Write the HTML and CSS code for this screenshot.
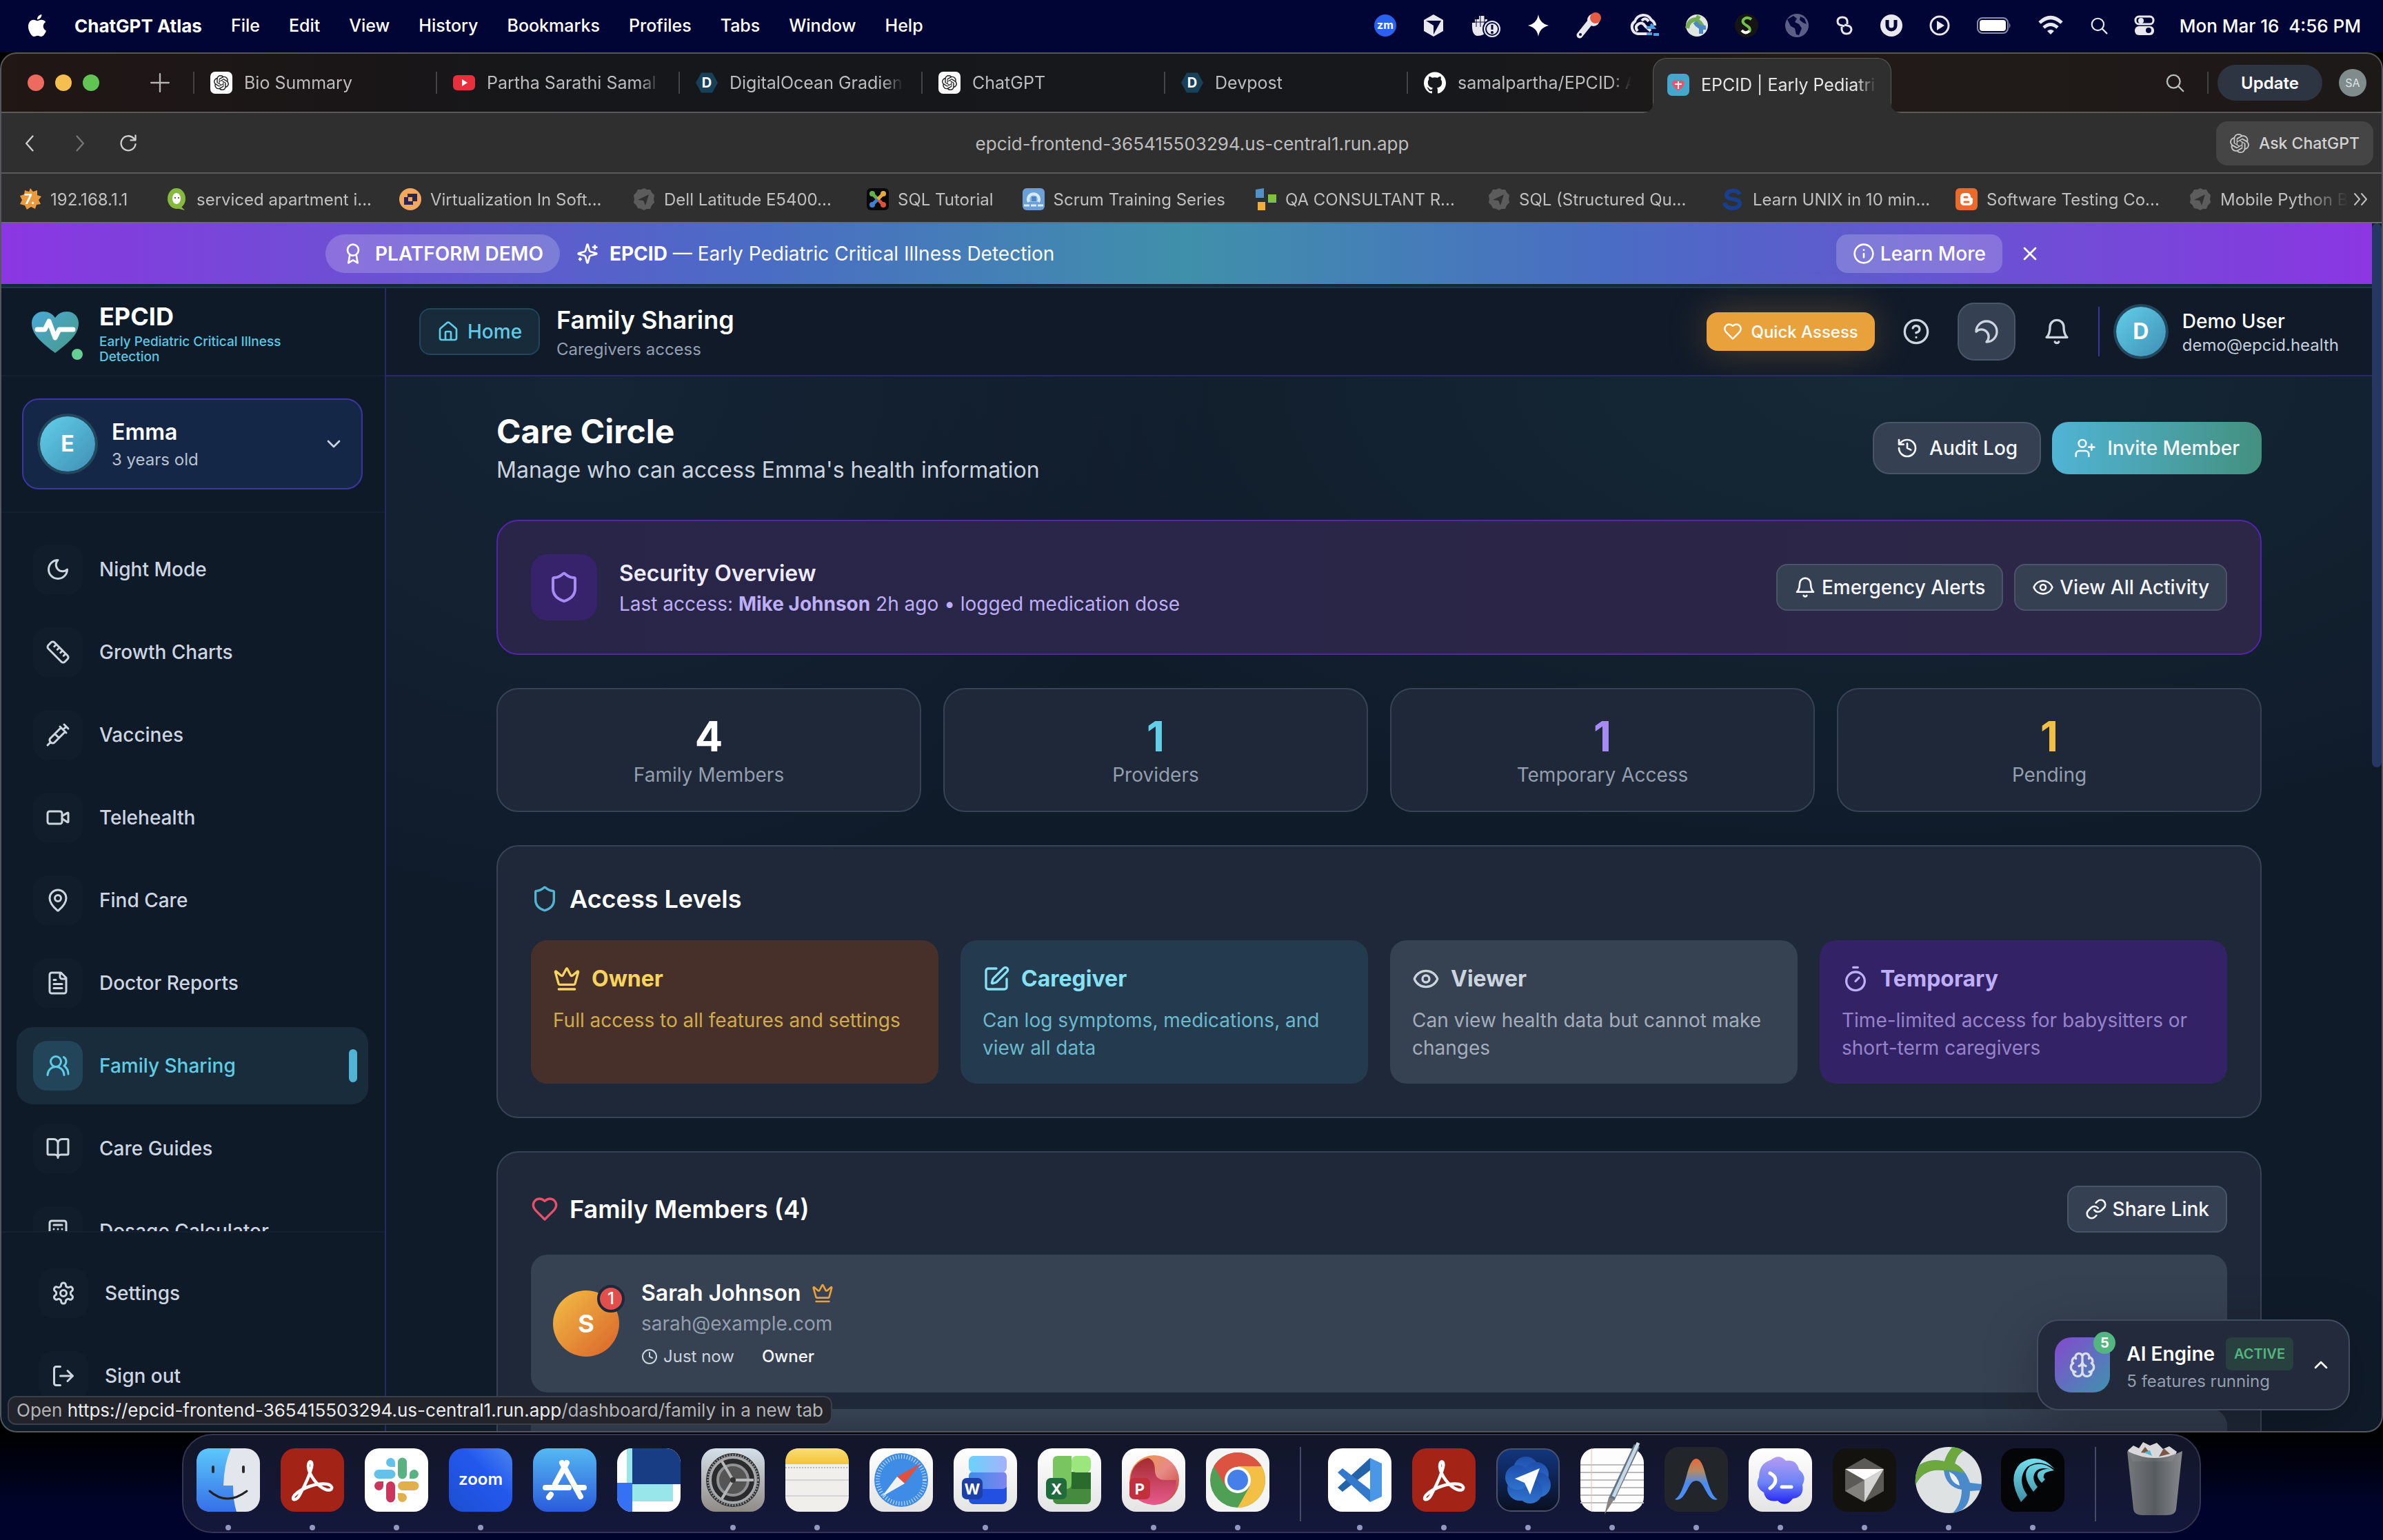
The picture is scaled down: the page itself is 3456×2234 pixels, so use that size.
FILE: index.html
```html
<!DOCTYPE html>
<html lang="en">
<head>
<meta charset="utf-8">
<title>EPCID | Early Pediatric Critical Illness Detection</title>
<link rel="stylesheet" href="styles.css">
</head>
<body>
<svg class="sprite" aria-hidden="true">
  <defs>
    <linearGradient id="g-heart" x1="0" y1="0" x2="1" y2="1"><stop offset="0" stop-color="#4ba9d6"/><stop offset="1" stop-color="#479a86"/></linearGradient>
    <linearGradient id="g-finder" x1="0" y1="0" x2="0" y2="1"><stop offset="0" stop-color="#5cc8fa"/><stop offset="1" stop-color="#356fe8"/></linearGradient>
    <linearGradient id="g-zoom" x1="1" y1="0" x2="0" y2="1"><stop offset="0" stop-color="#4a86f0"/><stop offset=".4" stop-color="#2358ee"/><stop offset="1" stop-color="#1c4fd0"/></linearGradient>
    <linearGradient id="g-store" x1="0" y1="0" x2="0" y2="1"><stop offset="0" stop-color="#55b8f3"/><stop offset="1" stop-color="#2a5bdb"/></linearGradient>
    <linearGradient id="g-grey" x1="0" y1="0" x2="0" y2="1"><stop offset="0" stop-color="#d5e0e9"/><stop offset="1" stop-color="#8f8b87"/></linearGradient>
    <linearGradient id="g-white" x1="0" y1="0" x2="0" y2="1"><stop offset="0" stop-color="#fff"/><stop offset="1" stop-color="#e4e4e4"/></linearGradient>
    <linearGradient id="g-notes" x1="0" y1="0" x2="0" y2="1"><stop offset="0" stop-color="#fadf76"/><stop offset="1" stop-color="#f4c13a"/></linearGradient>
    <linearGradient id="g-word1" x1="0" y1="0" x2="1" y2="0"><stop offset="0" stop-color="#69d2fb"/><stop offset="1" stop-color="#a4b2fb"/></linearGradient>
    <linearGradient id="g-word2" x1="0" y1="0" x2="1" y2="0"><stop offset="0" stop-color="#3a8ee8"/><stop offset="1" stop-color="#7f84f0"/></linearGradient>
    <linearGradient id="g-ppt" x1="0" y1="0" x2="1" y2="1"><stop offset="0" stop-color="#f09a3e"/><stop offset=".5" stop-color="#e78a86"/><stop offset="1" stop-color="#c2392e"/></linearGradient>
    <linearGradient id="g-ppt2" x1="0" y1="0" x2="0" y2="1"><stop offset="0" stop-color="#a32c2f"/><stop offset="1" stop-color="#e85a8e"/></linearGradient>
    <linearGradient id="g-nav" x1="0" y1="0" x2="0" y2="1"><stop offset="0" stop-color="#12367f"/><stop offset="1" stop-color="#0a0f20"/></linearGradient>
    <linearGradient id="g-petal" x1="0" y1="0" x2="0" y2="1"><stop offset="0" stop-color="#1f4fae"/><stop offset="1" stop-color="#2f73cc"/></linearGradient>
    <linearGradient id="g-arc" x1="0" y1="0" x2="0" y2="1"><stop offset="0" stop-color="#e8683a"/><stop offset=".3" stop-color="#b58a63"/><stop offset=".6" stop-color="#4a8af0"/><stop offset="1" stop-color="#4d8ff8"/></linearGradient>
    <linearGradient id="g-codex" x1="0" y1="0" x2="0" y2="1"><stop offset="0" stop-color="#b59cf3"/><stop offset=".55" stop-color="#6c83f5"/><stop offset="1" stop-color="#2222f2"/></linearGradient>
    <linearGradient id="g-wave" x1="0" y1="0" x2="0" y2="1"><stop offset="0" stop-color="#72e0ee"/><stop offset="1" stop-color="#3f8fa5"/></linearGradient>
    <linearGradient id="g-trash" x1="0" y1="0" x2="1" y2="0"><stop offset="0" stop-color="#7b7e80"/><stop offset=".5" stop-color="#5a5f62"/><stop offset="1" stop-color="#8d9092"/></linearGradient>
  </defs>
  <symbol id="i-award" viewBox="0 0 24 24"><circle cx="12" cy="8" r="6"/><path d="M15.477 12.89 17 22l-5-3-5 3 1.523-9.11"/></symbol>
  <symbol id="i-sparkles" viewBox="0 0 24 24"><path d="M9.937 15.5A2 2 0 0 0 8.5 14.063l-6.135-1.582a.5.5 0 0 1 0-.962L8.5 9.936A2 2 0 0 0 9.937 8.5l1.582-6.135a.5.5 0 0 1 .963 0L14.063 8.5A2 2 0 0 0 15.5 9.937l6.135 1.581a.5.5 0 0 1 0 .964L15.5 14.063a2 2 0 0 0-1.437 1.437l-1.582 6.135a.5.5 0 0 1-.963 0zM20 3v4M22 5h-4M4 17v2M5 18H3"/></symbol>
  <symbol id="i-info" viewBox="0 0 24 24"><circle cx="12" cy="12" r="10"/><path d="M12 16v-4M12 8h.01"/></symbol>
  <symbol id="i-x" viewBox="0 0 24 24"><path d="M18 6 6 18M6 6l12 12"/></symbol>
  <symbol id="i-house" viewBox="0 0 24 24"><path d="M15 21v-8a1 1 0 0 0-1-1h-4a1 1 0 0 0-1 1v8M3 10a2 2 0 0 1 .709-1.528l7-5.999a2 2 0 0 1 2.582 0l7 5.999A2 2 0 0 1 21 10v9a2 2 0 0 1-2 2H5a2 2 0 0 1-2-2z"/></symbol>
  <symbol id="i-heart" viewBox="0 0 24 24"><path d="M19 14c1.49-1.46 3-3.21 3-5.5A5.5 5.5 0 0 0 16.5 3c-1.76 0-3 .5-4.5 2-1.5-1.5-2.74-2-4.5-2A5.5 5.5 0 0 0 2 8.5c0 2.3 1.5 4.05 3 5.5l7 7Z"/></symbol>
  <symbol id="i-help" viewBox="0 0 24 24"><circle cx="12" cy="12" r="10"/><path d="M9.09 9a3 3 0 0 1 5.83 1c0 2-3 3-3 3M12 17h.01"/></symbol>
  <symbol id="i-moon" viewBox="0 0 24 24"><path d="M12 3a6 6 0 0 0 9 9 9 9 0 1 1-9-9Z"/></symbol>
  <symbol id="i-bell" viewBox="0 0 24 24"><path d="M6 8a6 6 0 0 1 12 0c0 7 3 9 3 9H3s3-2 3-9M10.3 21a1.94 1.94 0 0 0 3.4 0"/></symbol>
  <symbol id="i-down" viewBox="0 0 24 24"><path d="m6 9 6 6 6-6"/></symbol>
  <symbol id="i-up" viewBox="0 0 24 24"><path d="m18 15-6-6-6 6"/></symbol>
  <symbol id="i-ruler" viewBox="0 0 24 24"><path d="M21.3 15.3a2.4 2.4 0 0 1 0 3.4l-2.6 2.6a2.4 2.4 0 0 1-3.4 0L2.7 8.7a2.41 2.41 0 0 1 0-3.4l2.6-2.6a2.41 2.41 0 0 1 3.4 0ZM14.5 12.5l2-2M11.5 9.5l2-2M8.5 6.5l2-2M17.5 15.5l2-2"/></symbol>
  <symbol id="i-syringe" viewBox="0 0 24 24"><path d="m18 2 4 4M17 7l3-3M19 9 8.7 19.3c-1 1-2.5 1-3.4 0l-.6-.6c-1-1-1-2.5 0-3.4L15 5M9 11l4 4M5 19l-3 3M14 4l6 6"/></symbol>
  <symbol id="i-video" viewBox="0 0 24 24"><path d="m16 13 5.223 3.482a.5.5 0 0 0 .777-.416V7.87a.5.5 0 0 0-.752-.432L16 10.5"/><rect x="2" y="6" width="14" height="12" rx="2"/></symbol>
  <symbol id="i-pin" viewBox="0 0 24 24"><path d="M20 10c0 4.993-5.539 10.193-7.399 11.799a1 1 0 0 1-1.202 0C9.539 20.193 4 14.993 4 10a8 8 0 0 1 16 0"/><circle cx="12" cy="10" r="3"/></symbol>
  <symbol id="i-file" viewBox="0 0 24 24"><path d="M15 2H6a2 2 0 0 0-2 2v16a2 2 0 0 0 2 2h12a2 2 0 0 0 2-2V7ZM14 2v4a2 2 0 0 0 2 2h4M10 9H8M16 13H8M16 17H8"/></symbol>
  <symbol id="i-users" viewBox="0 0 24 24"><path d="M18 21a8 8 0 0 0-16 0"/><circle cx="10" cy="8" r="5"/><path d="M22 20c0-3.37-2-6.5-4-8a5 5 0 0 0-.45-8.3"/></symbol>
  <symbol id="i-book" viewBox="0 0 24 24"><path d="M12 7v14M3 18a1 1 0 0 1-1-1V4a1 1 0 0 1 1-1h5a4 4 0 0 1 4 4 4 4 0 0 1 4-4h5a1 1 0 0 1 1 1v13a1 1 0 0 1-1 1h-6a3 3 0 0 0-3 3 3 3 0 0 0-3-3z"/></symbol>
  <symbol id="i-calc" viewBox="0 0 24 24"><rect x="4" y="2" width="16" height="20" rx="2"/><path d="M8 6h8M16 14v4M16 10h.01M12 10h.01M8 10h.01M12 14h.01M8 14h.01M12 18h.01M8 18h.01"/></symbol>
  <symbol id="i-gear" viewBox="0 0 24 24"><path d="M12.22 2h-.44a2 2 0 0 0-2 2v.18a2 2 0 0 1-1 1.73l-.43.25a2 2 0 0 1-2 0l-.15-.08a2 2 0 0 0-2.73.73l-.22.38a2 2 0 0 0 .73 2.73l.15.1a2 2 0 0 1 1 1.72v.51a2 2 0 0 1-1 1.74l-.15.09a2 2 0 0 0-.73 2.73l.22.38a2 2 0 0 0 2.73.73l.15-.08a2 2 0 0 1 2 0l.43.25a2 2 0 0 1 1 1.73V20a2 2 0 0 0 2 2h.44a2 2 0 0 0 2-2v-.18a2 2 0 0 1 1-1.73l.43-.25a2 2 0 0 1 2 0l.15.08a2 2 0 0 0 2.73-.73l.22-.39a2 2 0 0 0-.73-2.73l-.15-.08a2 2 0 0 1-1-1.74v-.5a2 2 0 0 1 1-1.74l.15-.09a2 2 0 0 0 .73-2.73l-.22-.38a2 2 0 0 0-2.73-.73l-.15.08a2 2 0 0 1-2 0l-.43-.25a2 2 0 0 1-1-1.73V4a2 2 0 0 0-2-2z"/><circle cx="12" cy="12" r="3"/></symbol>
  <symbol id="i-logout" viewBox="0 0 24 24"><path d="M9 21H5a2 2 0 0 1-2-2V5a2 2 0 0 1 2-2h4M16 17l5-5-5-5M21 12H9"/></symbol>
  <symbol id="i-history" viewBox="0 0 24 24"><path d="M3 12a9 9 0 1 0 9-9 9.75 9.75 0 0 0-6.74 2.74L3 8M3 3v5h5M12 7v5l4 2"/></symbol>
  <symbol id="i-userplus" viewBox="0 0 24 24"><path d="M16 21v-2a4 4 0 0 0-4-4H6a4 4 0 0 0-4 4v2M19 8v6M22 11h-6"/><circle cx="9" cy="7" r="4"/></symbol>
  <symbol id="i-shield" viewBox="0 0 24 24"><path d="M20 13c0 5-3.5 7.5-7.66 8.95a1 1 0 0 1-.67-.01C7.5 20.5 4 18 4 13V6a1 1 0 0 1 1-1c2 0 4.5-1.2 6.24-2.72a1.17 1.17 0 0 1 1.52 0C14.51 3.81 17 5 19 5a1 1 0 0 1 1 1z"/></symbol>
  <symbol id="i-eye" viewBox="0 0 24 24"><path d="M2.062 12.348a1 1 0 0 1 0-.696 10.75 10.75 0 0 1 19.876 0 1 1 0 0 1 0 .696 10.75 10.75 0 0 1-19.876 0"/><circle cx="12" cy="12" r="3"/></symbol>
  <symbol id="i-crown" viewBox="0 0 24 24"><path d="M11.562 3.266a.5.5 0 0 1 .876 0L15.39 8.87a1 1 0 0 0 1.516.294L21.183 5.5a.5.5 0 0 1 .798.519l-2.834 10.246a1 1 0 0 1-.956.734H5.81a1 1 0 0 1-.957-.734L2.02 6.02a.5.5 0 0 1 .798-.519l4.276 3.664a1 1 0 0 0 1.516-.294zM5 21h14"/></symbol>
  <symbol id="i-pen" viewBox="0 0 24 24"><path d="M12 3H5a2 2 0 0 0-2 2v14a2 2 0 0 0 2 2h14a2 2 0 0 0 2-2v-7M18.375 2.625a1 1 0 0 1 3 3l-9.013 9.014a2 2 0 0 1-.853.505l-2.873.84a.5.5 0 0 1-.62-.62l.84-2.873a2 2 0 0 1 .506-.852z"/></symbol>
  <symbol id="i-timer" viewBox="0 0 24 24"><path d="M10 2h4M12 14l3-3"/><circle cx="12" cy="14" r="8"/></symbol>
  <symbol id="i-link" viewBox="0 0 24 24"><path d="M10 13a5 5 0 0 0 7.54.54l3-3a5 5 0 0 0-7.07-7.07l-1.72 1.71M14 11a5 5 0 0 0-7.54-.54l-3 3a5 5 0 0 0 7.07 7.07l1.71-1.71"/></symbol>
  <symbol id="i-clock" viewBox="0 0 24 24"><circle cx="12" cy="12" r="10"/><path d="M12 6v6l4 2"/></symbol>
  <symbol id="i-brain" viewBox="0 0 24 24"><path d="M12 5a3 3 0 1 0-5.997.125 4 4 0 0 0-2.526 5.77 4 4 0 0 0 .556 6.588A4 4 0 1 0 12 18ZM12 5a3 3 0 1 1 5.997.125 4 4 0 0 1 2.526 5.77 4 4 0 0 1-.556 6.588A4 4 0 1 1 12 18ZM15 13a4.5 4.5 0 0 1-3-4 4.5 4.5 0 0 1-3 4M17.599 6.5a3 3 0 0 0 .399-1.375M6.003 5.125A3 3 0 0 0 6.401 6.5M3.477 10.896a4 4 0 0 1 .585-.396M19.938 10.5a4 4 0 0 1 .585.396M6 18a4 4 0 0 1-1.967-.516M19.967 17.484A4 4 0 0 1 18 18"/></symbol>
  <symbol id="i-search" viewBox="0 0 24 24"><circle cx="10.500" cy="10.500" r="8"/><path d="m16.500 16.500 6 6"/></symbol>
  <symbol id="i-plus" viewBox="0 0 24 24"><path d="M12 1v22M1 12h22"/></symbol>
  <symbol id="i-back" viewBox="0 0 24 24"><path d="m15 3-8 9 8 9"/></symbol>
  <symbol id="i-fwd" viewBox="0 0 24 24"><path d="m9 3 8 9-8 9"/></symbol>
  <symbol id="i-reload" viewBox="0 0 24 24"><path d="M21 13a9 9 0 1 1-2.500-7.500L21 8M21 2v6h-6"/></symbol>
  <symbol id="i-openai" viewBox="0 0 24 24"><path d="M22.2819 9.8211a5.9847 5.9847 0 0 0-.5157-4.9108 6.0462 6.0462 0 0 0-6.5098-2.9A6.0651 6.0651 0 0 0 4.9807 4.1818a5.9847 5.9847 0 0 0-3.9977 2.9 6.0462 6.0462 0 0 0 .7427 7.0966 5.98 5.98 0 0 0 .511 4.9107 6.051 6.051 0 0 0 6.5146 2.9001A5.9847 5.9847 0 0 0 13.2599 24a6.0557 6.0557 0 0 0 5.7718-4.2058 5.9894 5.9894 0 0 0 3.9977-2.9001 6.0557 6.0557 0 0 0-.7475-7.0729zm-9.022 12.6081a4.4755 4.4755 0 0 1-2.8764-1.0408l.1419-.0804 4.7783-2.7582a.7948.7948 0 0 0 .3927-.6813v-6.7369l2.02 1.1686a.071.071 0 0 1 .038.052v5.5826a4.504 4.504 0 0 1-4.4945 4.4944zm-9.6607-4.1254a4.4708 4.4708 0 0 1-.5346-3.0137l.142.0852 4.783 2.7582a.7712.7712 0 0 0 .7806 0l5.8428-3.3685v2.3324a.0804.0804 0 0 1-.0332.0615L9.74 19.9502a4.4992 4.4992 0 0 1-6.1408-1.6464zM2.3408 7.8956a4.485 4.485 0 0 1 2.3655-1.9728V11.6a.7664.7664 0 0 0 .3879.6765l5.8144 3.3543-2.0201 1.1685a.0757.0757 0 0 1-.071 0l-4.8303-2.7865A4.504 4.504 0 0 1 2.3408 7.872zm16.5963 3.8558L13.1038 8.364 15.1192 7.2a.0757.0757 0 0 1 .071 0l4.8303 2.7913a4.4944 4.4944 0 0 1-.6765 8.1042v-5.6772a.79.79 0 0 0-.407-.667zm2.0107-3.0231l-.142-.0852-4.7735-2.7818a.7759.7759 0 0 0-.7854 0L9.409 9.2297V6.8974a.0662.0662 0 0 1 .0284-.0615l4.8303-2.7866a4.4992 4.4992 0 0 1 6.6802 4.66zM8.3065 12.863l-2.02-1.1638a.0804.0804 0 0 1-.038-.0567V6.0742a4.4992 4.4992 0 0 1 7.3757-3.4537l-.142.0805L8.704 5.459a.7948.7948 0 0 0-.3927.6813zm1.0976-2.3654l2.602-1.4998 2.6069 1.4998v2.9994l-2.5974 1.4997-2.6067-1.4997Z"/></symbol>
  <symbol id="f-gpt" viewBox="0 0 32 32"><rect width="32" height="32" rx="7" fill="#fff"/><use href="#i-openai" x="5" y="5" width="22" height="22" fill="#222"/></symbol>
  <symbol id="f-hex" viewBox="0 0 32 32"><path d="M8 1.500h16L32 16l-8 14.500H8L0 16z" fill="#17405a"/><text x="16" y="23" text-anchor="middle" font-size="20" font-weight="700" fill="#fff">D</text></symbol>
  <symbol id="f-globe" viewBox="0 0 32 32"><path d="M16 0l4 2 5 0 2 4 4 4-1 6 1 5-4 4-2 5-5 0-4 2-4-2-5-1-2-4-4-4 1-5-1-6 4-4 2-4 5 0z" fill="#5c5c5c"/><path d="M7 17l16-8-5 16-3-7z" fill="#303030"/></symbol>
  <symbol id="d-acrobat" viewBox="0 0 92 92"><rect width="92" height="92" rx="21" fill="#a32417"/><path d="M20 68c-6 8 3 9 8-1 7-13 14-27 17-40 2-10-5-10-5-1 1 13 14 30 26 34 10 3 11-6 2-8-14-2-36 4-48 16z" fill="none" stroke="#fff" stroke-width="4.500" stroke-linejoin="round"/></symbol>
</svg>

<header class="menubar">
  <svg class="apple" viewBox="0 0 24 24" aria-hidden="true"><path fill="#fff" d="M12.152 6.896c-.948 0-2.415-1.078-3.960-1.040-2.040.027-3.910 1.183-4.961 3.014-2.117 3.675-.546 9.103 1.519 12.090 1.013 1.454 2.208 3.090 3.792 3.039 1.520-.065 2.090-.987 3.935-.987 1.831 0 2.350.987 3.960.948 1.637-.026 2.676-1.480 3.676-2.948 1.156-1.688 1.636-3.325 1.662-3.415-.039-.013-3.182-1.221-3.220-4.857-.026-3.040 2.480-4.494 2.597-4.559-1.429-2.090-3.623-2.324-4.390-2.376-2-.156-3.675 1.090-4.610 1.090zM15.530 3.830c.843-1.012 1.400-2.427 1.245-3.830-1.207.052-2.662.805-3.532 1.818-.780.896-1.454 2.338-1.273 3.714 1.338.104 2.715-.688 3.559-1.701"/></svg>
  <nav class="menus" aria-label="Application menus">
    <button class="menu menu-app">ChatGPT Atlas</button><button class="menu">File</button><button class="menu">Edit</button><button class="menu">View</button><button class="menu">History</button><button class="menu">Bookmarks</button><button class="menu">Profiles</button><button class="menu">Tabs</button><button class="menu">Window</button><button class="menu">Help</button>
  </nav>
  <div class="status" aria-hidden="true">
    <svg width="32" height="32" viewBox="0 0 32 32"><circle cx="16" cy="16" r="16" fill="#2a62f0"/><text x="16" y="21" text-anchor="middle" font-size="16" font-weight="700" fill="#fff">zm</text></svg>
    <svg width="30" height="34" viewBox="0 0 30 34"><path d="M15 1l14 8v16l-14 8-14-8V9z" fill="#e8e8ee"/><path d="M4 10h22L15 30V17z" fill="#02063a"/></svg>
    <svg width="44" height="38" viewBox="0 0 44 38"><path d="M2 15h4v-5h6v-5h8v5h4v6q6-3 10 1-2 4-8 5-4 12-16 12Q1 34 2 15z" fill="#e8e8ee"/><path d="M2 14h22M8 9v12M14 4v17M20 4v17" stroke="#02063a" stroke-width="1"/><circle cx="31" cy="24" r="13" fill="#e8e8ee" stroke="#02063a" stroke-width="2"/><circle cx="31" cy="24" r="9" fill="none" stroke="#02063a" stroke-width="2"/><path d="M31 18v7" stroke="#02063a" stroke-width="3"/><circle cx="31" cy="29" r="2" fill="#02063a"/></svg>
    <svg width="30" height="32" viewBox="0 0 30 32"><path d="M15 0q2 13 15 16-13 3-15 16-2-13-15-16 13-3 15-16z" fill="#fff"/></svg>
    <svg width="38" height="40" viewBox="0 0 38 40"><path d="M6 34L22 14" stroke="#e8e8ee" stroke-width="9" stroke-linecap="round"/><circle cx="26" cy="12" r="9" fill="#e8e8ee"/><circle cx="29" cy="9" r="8" fill="#e35b45"/><circle cx="7" cy="33" r="2" fill="#02063a"/></svg>
    <svg width="44" height="34" viewBox="0 0 44 34" fill="none"><path d="M30 29H13A10 10 0 0 1 9 11 13 13 0 0 1 33 9q5 3 5 8" stroke="#e8e8ee" stroke-width="4"/><path d="M13 25q-5-6 1-10t10 3l8 7M19 10q5-6 10 1" stroke="#e8e8ee" stroke-width="4"/><path d="M26 20h10l-4-5m4 15h8M34 29h-8" stroke="#4aa3e0" stroke-width="4"/></svg>
    <svg width="32" height="32" viewBox="0 0 32 32"><circle cx="16" cy="16" r="16" fill="#dfe6e3"/><path d="M2 20Q4 7 16 7l3-5M14 8q8 2 12 14" stroke="#74ab52" stroke-width="6" fill="none"/><path d="M13 11q6 9 16 8M22 20v8" stroke="#4b8ac0" stroke-width="6" fill="none"/></svg>
    <svg width="34" height="34" viewBox="0 0 34 34"><circle cx="17" cy="17" r="17" fill="#151515"/><path d="M24 8q-7-5-12 1-2 4 5 8t4 9" stroke="#74c04b" stroke-width="4" fill="none"/><path d="M10 24q5 6 11 1" stroke="#fff" stroke-width="4" fill="none"/></svg>
    <svg width="34" height="34" viewBox="0 0 34 34"><circle cx="17" cy="17" r="17" fill="#5c5f85"/><path d="M3 8l9-5 5 4-3 5 6 3 4 6-4 10-4-1-2-9-6-3zM22 4l6 3 3 8-5-2-5-4z" fill="#02063a"/></svg>
    <svg width="26" height="30" viewBox="0 0 26 30" fill="none" stroke="#e8e8ee" stroke-width="3"><path d="M17 13V8q-1-5-7-5-7 0-7 6 0 5 6 6l4 1"/><path d="M9 17v4q1 6 7 6t7-6q0-5-6-6l-4-1"/></svg>
    <svg width="32" height="32" viewBox="0 0 32 32"><circle cx="16" cy="16" r="16" fill="#e8e8ee"/><path d="M10 8v8a6 6 0 0 0 12 0V8" stroke="#02063a" stroke-width="5" fill="none"/></svg>
    <svg width="30" height="30" viewBox="0 0 30 30"><circle cx="15" cy="15" r="13" fill="none" stroke="#e8e8ee" stroke-width="3"/><path d="M11 8l11 7-11 7z" fill="#e8e8ee"/></svg>
    <svg width="50" height="24" viewBox="0 0 50 24"><rect x="1" y="1" width="44" height="22" rx="7" fill="none" stroke="#8b8da8" stroke-width="2"/><rect x="4" y="4" width="38" height="16" rx="4" fill="#fff"/><path d="M47 8q3 4 0 8z" fill="#8b8da8"/></svg>
    <svg width="36" height="28" viewBox="0 0 36 28" fill="none" stroke="#e8e8ee" stroke-width="5"><path d="M2 10q16-15 32 0M8 17q10-9 20 0"/><path d="M18 27l-5-5q5-4 10 0z" fill="#e8e8ee" stroke="none"/></svg>
    <svg class="stroke" width="26" height="28" viewBox="0 0 24 24"><use href="#i-search"/></svg>
    <svg width="28" height="28" viewBox="0 0 28 28"><rect x="1" y="1" width="26" height="11" rx="5" fill="none" stroke="#e8e8ee" stroke-width="3"/><circle cx="9" cy="7" r="4" fill="#e8e8ee"/><rect y="15" width="28" height="13" rx="6" fill="#e8e8ee"/><circle cx="20" cy="21" r="4" fill="#02063a"/></svg>
  </div>
  <time class="clock">Mon Mar 16&nbsp; 4:56 PM</time>
</header>

<div class="window">
  <div class="tabbar">
    <div class="lights"><button class="light red" aria-label="Close"></button><button class="light yellow" aria-label="Minimise"></button><button class="light green" aria-label="Zoom"></button></div>
    <button class="bare newtab" aria-label="New tab"><svg class="stroke" width="28" height="28"><use href="#i-plus"/></svg></button>
    <div class="tabs">
      <a class="tab" href="#"><svg width="32" height="32"><use href="#f-gpt"/></svg><span>Bio Summary</span></a>
      <a class="tab" href="#"><svg width="32" height="32" viewBox="0 0 32 32"><rect y="5" width="32" height="22" rx="6" fill="#e8303d"/><path d="M13 11l8 5-8 5z" fill="#fff"/></svg><span>Partha Sarathi Samal</span></a>
      <a class="tab" href="#"><svg width="32" height="32"><use href="#f-hex"/></svg><span>DigitalOcean Gradien</span></a>
      <a class="tab" href="#"><svg width="32" height="32"><use href="#f-gpt"/></svg><span>ChatGPT</span></a>
      <a class="tab" href="#"><svg width="32" height="32"><use href="#f-hex"/></svg><span>Devpost</span></a>
      <a class="tab" href="#"><svg width="32" height="32" viewBox="0 0 24 24"><path fill="#fff" d="M12 .297c-6.630 0-12 5.373-12 12 0 5.303 3.438 9.800 8.205 11.385.600.113.820-.258.820-.577 0-.285-.010-1.040-.015-2.040-3.338.724-4.042-1.610-4.042-1.610C4.422 18.070 3.633 17.700 3.633 17.700c-1.087-.744.084-.729.084-.729 1.205.084 1.838 1.236 1.838 1.236 1.070 1.835 2.809 1.305 3.495.998.108-.776.417-1.305.760-1.605-2.665-.300-5.466-1.332-5.466-5.930 0-1.310.465-2.380 1.235-3.220-.135-.303-.540-1.523.105-3.176 0 0 1.005-.322 3.300 1.230.960-.267 1.980-.399 3-.405 1.020.006 2.040.138 3 .405 2.280-1.552 3.285-1.230 3.285-1.230.645 1.653.240 2.873.120 3.176.765.840 1.230 1.910 1.230 3.220 0 4.610-2.805 5.625-5.475 5.920.420.360.810 1.096.810 2.220 0 1.606-.015 2.896-.015 3.286 0 .315.210.690.825.570C20.565 22.092 24 17.592 24 12.297c0-6.627-5.373-12-12-12"/></svg><span>samalpartha/EPCID: A</span></a>
      <a class="tab tab-active" href="#" aria-current="page"><svg width="32" height="32" viewBox="0 0 32 32"><rect width="32" height="32" rx="7" fill="#45a7cb"/><path d="M16 25Q7 18 7 13q1-5 9-3 8-2 9 3 0 5-9 12z" fill="#e8556a"/><path d="M16 11v11M11 15h10" stroke="#fff" stroke-width="2"/></svg><span>EPCID | Early Pediatri</span></a>
    </div>
    <div class="tabtools">
      <button class="bare" aria-label="Search tabs"><svg class="stroke" width="28" height="28"><use href="#i-search"/></svg></button>
      <button class="update">Update</button>
      <span class="profile">SA</span>
    </div>
  </div>
  <div class="toolbar">
    <button class="bare" aria-label="Back"><svg class="stroke" width="28" height="28"><use href="#i-back"/></svg></button>
    <button class="bare dim" aria-label="Forward"><svg class="stroke" width="28" height="28"><use href="#i-fwd"/></svg></button>
    <button class="bare" aria-label="Reload"><svg class="stroke" width="28" height="28"><use href="#i-reload"/></svg></button>
    <input class="address" type="text" aria-label="Address" value="epcid-frontend-365415503294.us-central1.run.app">
    <button class="ask"><svg width="28" height="28" fill="#c8c8c8"><use href="#i-openai"/></svg>Ask ChatGPT</button>
  </div>
  <nav class="bookmarks" aria-label="Bookmarks">
    <div class="marks">
    <a class="mark mark-ip" href="#"><svg width="32" height="32" viewBox="0 0 32 32"><path d="M16 0l4 5 6-2 0 7 6 2-4 5 3 6-6 1-2 6-6-3-6 4-3-6-7-2 3-6-3-6 6-2 1-6 6 2z" fill="#e89a3c"/><text x="15" y="23" text-anchor="middle" font-size="20" font-weight="700" fill="#fff">7.</text></svg>192.168.1.1</a>
    <a class="mark mark-cut" href="#"><svg width="32" height="32" viewBox="0 0 32 32"><ellipse cx="16" cy="15" rx="13" ry="15" fill="#86b93d"/><path d="M20 24l8 8-12-3z" fill="#86b93d"/><ellipse cx="16" cy="15" rx="6" ry="8" fill="#fff"/><circle cx="14" cy="14" r="1" fill="#333"/><circle cx="19" cy="14" r="1" fill="#333"/></svg>serviced apartment i...</a>
    <a class="mark mark-cut" href="#"><svg width="32" height="32" viewBox="0 0 32 32"><circle cx="16" cy="16" r="16" fill="#f0a95f"/><path d="M12 8h14v11h-6v5H7V13h5z" fill="#2a2555"/><path d="M13 13h6v6h-6z" fill="#f0a95f"/></svg>Virtualization In Soft...</a>
    <a class="mark mark-cut" href="#"><svg width="32" height="32"><use href="#f-globe"/></svg>Dell Latitude E5400...</a>
    <a class="mark" href="#"><svg width="32" height="32" viewBox="0 0 32 32"><rect width="32" height="32" rx="6" fill="#090909"/><path d="M8 8l8 8" stroke="#65b04a" stroke-width="5"/><path d="M16 16l8 8" stroke="#e04f3a" stroke-width="5"/><path d="M8 24l8-8" stroke="#3d7fd0" stroke-width="5"/><path d="M16 16l8-8" stroke="#e8a83a" stroke-width="5"/><circle cx="8" cy="8" r="4" fill="#65b04a"/><circle cx="24" cy="8" r="4" fill="#e8a83a"/><circle cx="8" cy="24" r="4" fill="#3d7fd0"/><circle cx="24" cy="24" r="4" fill="#e04f3a"/></svg>SQL Tutorial</a>
    <a class="mark" href="#"><svg width="32" height="32" viewBox="0 0 32 32"><rect width="32" height="32" rx="6" fill="#6aa0d5"/><path d="M9 20a8 8 0 1 1 14 0" fill="#8fbde6" stroke="#d9ebfa" stroke-width="4"/><path d="M13 12h7v7h-7z" fill="#4c86c4"/><path d="M2 25h28" stroke="#d9ebfa" stroke-width="3" stroke-dasharray="8 2"/></svg>Scrum Training Series</a>
    <a class="mark mark-cut" href="#"><svg width="32" height="32" viewBox="0 0 32 32"><path d="M2 14V2l12-2v14z" fill="#4f93c8"/><path d="M20 9h12v12H20z" fill="#7fc241"/><path d="M5 20h11v12H5z" fill="#efad3a"/></svg>QA CONSULTANT R...</a>
    <a class="mark mark-cut" href="#"><svg width="32" height="32"><use href="#f-globe"/></svg>SQL (Structured Qu...</a>
    <a class="mark mark-cut" href="#"><svg width="32" height="32" viewBox="0 0 32 32"><path d="M26 9Q23 3 15 4q-8 1-8 6c0 9 19 3 19 12 0 5-5 7-10 7-7 0-11-3-12-8" fill="none" stroke="#173f8e" stroke-width="6"/></svg>Learn UNIX in 10 min...</a>
    <a class="mark mark-cut" href="#"><svg width="32" height="32" viewBox="0 0 32 32"><rect width="32" height="32" rx="6" fill="#e86b2c"/><path d="M13 7h4q5 0 5 6l3 2v4q0 6-6 6h-6q-6 0-6-6v-6q0-6 6-6z" fill="#fff"/><path d="M13 13h4M13 20h6" stroke="#e86b2c" stroke-width="3" stroke-linecap="round"/></svg>Software Testing Co...</a>
    <a class="mark" href="#"><svg width="32" height="32"><use href="#f-globe"/></svg>Mobile Python B</a>
    </div>
    <button class="bare more" aria-label="More bookmarks"><svg class="stroke" width="24" height="24" viewBox="0 0 24 24"><path d="m3 4 7 8-7 8M13 4l7 8-7 8"/></svg></button>
  </nav>

  <div class="viewport">
    <div class="page">
      <div class="banner">
        <div class="banner-in">
          <span class="demo"><svg class="stroke" width="32" height="32"><use href="#i-award"/></svg>PLATFORM DEMO</span>
          <p class="pitch"><svg class="stroke" width="32" height="32"><use href="#i-sparkles"/></svg><span><b>EPCID</b> — Early Pediatric Critical Illness Detection</span></p>
          <button class="learn"><svg class="stroke" width="32" height="32"><use href="#i-info"/></svg>Learn More</button>
          <button class="bare dismiss" aria-label="Dismiss"><svg class="stroke" width="32" height="32"><use href="#i-x"/></svg></button>
        </div>
      </div>
      <div class="app">
        <aside class="sidebar">
          <div class="brand">
            <svg width="80" height="80" viewBox="0 0 80 80" aria-hidden="true"><path d="M40 69C20 54 6 42 6 26 6 15 14 9 23 9c7 0 13 3 17 9 4-6 10-9 17-9 9 0 17 6 17 17 0 16-14 28-34 43z" fill="url(#g-heart)"/><path d="M14 35h11l6-12 9 24 6-12h20" fill="none" stroke="#fff" stroke-width="7" stroke-linecap="round" stroke-linejoin="round"/><circle cx="72" cy="71" r="8" fill="#66cf95"/></svg>
            <div><strong class="brand-name">EPCID</strong><p class="brand-sub">Early Pediatric Critical Illness Detection</p></div>
          </div>
          <div class="child">
            <button class="child-card"><span class="avatar avatar-lg">E</span><span class="child-text"><b>Emma</b><small>3 years old</small></span><svg class="stroke" width="32" height="32"><use href="#i-down"/></svg></button>
          </div>
          <nav class="nav" aria-label="Sections">
            <a class="item" href="#"><span class="ibox"><svg class="stroke" width="36" height="36"><use href="#i-moon"/></svg></span>Night Mode</a>
            <a class="item" href="#"><span class="ibox"><svg class="stroke" width="36" height="36"><use href="#i-ruler"/></svg></span>Growth Charts</a>
            <a class="item" href="#"><span class="ibox"><svg class="stroke" width="36" height="36"><use href="#i-syringe"/></svg></span>Vaccines</a>
            <a class="item" href="#"><span class="ibox"><svg class="stroke" width="36" height="36"><use href="#i-video"/></svg></span>Telehealth</a>
            <a class="item" href="#"><span class="ibox"><svg class="stroke" width="36" height="36"><use href="#i-pin"/></svg></span>Find Care</a>
            <a class="item" href="#"><span class="ibox"><svg class="stroke" width="36" height="36"><use href="#i-file"/></svg></span>Doctor Reports</a>
            <a class="item item-active" href="#" aria-current="page"><span class="ibox"><svg class="stroke" width="36" height="36"><use href="#i-users"/></svg></span>Family Sharing</a>
            <a class="item" href="#"><span class="ibox"><svg class="stroke" width="36" height="36"><use href="#i-book"/></svg></span>Care Guides</a>
            <a class="item" href="#"><span class="ibox"><svg class="stroke" width="36" height="36"><use href="#i-calc"/></svg></span>Dosage Calculator</a>
          </nav>
          <div class="sidefoot">
            <a class="item" href="#"><span class="ibox"><svg class="stroke" width="36" height="36"><use href="#i-gear"/></svg></span>Settings</a>
            <a class="item" href="#"><span class="ibox"><svg class="stroke" width="36" height="36"><use href="#i-logout"/></svg></span>Sign out</a>
          </div>
        </aside>
        <div class="content">
          <header class="topbar">
            <a class="home" href="#"><svg class="stroke" width="32" height="32"><use href="#i-house"/></svg>Home</a>
            <div class="crumb"><h2>Family Sharing</h2><p>Caregivers access</p></div>
            <button class="quick"><svg class="stroke" width="28" height="28"><use href="#i-heart"/></svg>Quick Assess</button>
            <button class="round" aria-label="Help"><svg class="stroke" width="40" height="40"><use href="#i-help"/></svg></button>
            <button class="round round-on" aria-label="Toggle theme"><svg class="stroke flip" width="40" height="40"><use href="#i-moon"/></svg></button>
            <button class="round" aria-label="Notifications"><svg class="stroke" width="40" height="40"><use href="#i-bell"/></svg></button>
            <div class="user"><span class="avatar">D</span><div class="user-text"><b>Demo User</b><small>demo@epcid.health</small></div></div>
          </header>
          <main class="main">
            <div class="stack">
              <div class="titlerow">
                <div class="grow"><h1>Care Circle</h1><p class="lead">Manage who can access Emma's health information</p></div>
                <button class="btn"><svg class="stroke" width="32" height="32"><use href="#i-history"/></svg>Audit Log</button>
                <button class="btn btn-main"><svg class="stroke" width="32" height="32"><use href="#i-userplus"/></svg>Invite Member</button>
              </div>
              <section class="card security">
                <span class="sec-icon"><svg class="stroke" width="48" height="48"><use href="#i-shield"/></svg></span>
                <div class="grow"><h3>Security Overview</h3><p>Last access: <b>Mike Johnson</b> 2h ago • logged medication dose</p></div>
                <button class="btn btn-sm"><svg class="stroke" width="32" height="32"><use href="#i-bell"/></svg>Emergency Alerts</button>
                <button class="btn btn-sm"><svg class="stroke" width="32" height="32"><use href="#i-eye"/></svg>View All Activity</button>
              </section>
              <div class="grid stats">
                <div class="card stat"><strong>4</strong><span>Family Members</span></div>
                <div class="card stat cyan"><strong>1</strong><span>Providers</span></div>
                <div class="card stat violet"><strong>1</strong><span>Temporary Access</span></div>
                <div class="card stat amber"><strong>1</strong><span>Pending</span></div>
              </div>
              <section class="card">
                <h3 class="head head-levels"><svg class="stroke" width="40" height="40"><use href="#i-shield"/></svg>Access Levels</h3>
                <div class="grid">
                  <div class="level owner"><h4><svg class="stroke" width="40" height="40"><use href="#i-crown"/></svg>Owner</h4><p>Full access to all features and settings</p></div>
                  <div class="level caregiver"><h4><svg class="stroke" width="40" height="40"><use href="#i-pen"/></svg>Caregiver</h4><p>Can log symptoms, medications, and view all data</p></div>
                  <div class="level viewer"><h4><svg class="stroke" width="40" height="40"><use href="#i-eye"/></svg>Viewer</h4><p>Can view health data but cannot make changes</p></div>
                  <div class="level temporary"><h4><svg class="stroke" width="40" height="40"><use href="#i-timer"/></svg>Temporary</h4><p>Time-limited access for babysitters or short-term caregivers</p></div>
                </div>
              </section>
              <section class="card">
                <div class="membershead"><h3 class="head head-members grow"><svg class="stroke" width="40" height="40"><use href="#i-heart"/></svg>Family Members (4)</h3><button class="btn btn-sm"><svg class="stroke" width="32" height="32"><use href="#i-link"/></svg>Share Link</button></div>
                <div class="members">
                  <article class="member">
                    <span class="face">S<i class="count">1</i></span>
                    <div><h4>Sarah Johnson <svg class="stroke" width="32" height="32"><use href="#i-crown"/></svg></h4><p class="mail">sarah@example.com</p><p class="meta"><svg class="stroke" width="24" height="24"><use href="#i-clock"/></svg>Just now<span class="role">Owner</span></p></div>
                  </article>
                  <article class="member member-next"></article>
                </div>
              </section>
            </div>
          </main>
        </div>
      </div>
      <button class="engine">
        <span class="engine-icon"><svg class="stroke" width="40" height="40"><use href="#i-brain"/></svg><i class="engine-count">5</i></span>
        <span class="engine-text"><span class="engine-title">AI Engine<em>ACTIVE</em></span><small>5 features running</small></span>
        <svg class="stroke" width="32" height="32"><use href="#i-up"/></svg>
      </button>
    </div>
    <div class="scroll" aria-hidden="true"><div class="thumb"></div></div>
  </div>
  <p class="hint">Open <b>https://epcid-frontend-365415503294.us-central1.run.app</b>/dashboard/family in a new tab</p>
</div>

<footer class="dock" aria-label="Dock">
  <span class="app-icon on"><svg viewBox="0 0 92 92"><rect width="92" height="92" rx="21" fill="#e3e6ec"/><path d="M50 0H21Q0 0 0 21v50q0 21 21 21h37q-5-16-5-38H39Q40 22 50 0z" fill="url(#g-finder)"/><path d="M24 27v7M68 27v7" stroke="#2b2b2b" stroke-width="4" stroke-linecap="round"/><path d="M19 62q25 22 54 0" fill="none" stroke="#222" stroke-width="3" stroke-linecap="round"/></svg></span>
  <span class="app-icon on"><svg><use href="#d-acrobat"/></svg></span>
  <span class="app-icon on"><svg viewBox="0 0 92 92"><rect width="92" height="92" rx="21" fill="#fff"/><g stroke-width="13" stroke-linecap="round" fill="none"><path d="M20 37.500h18" stroke="#64c2ea"/><path d="M54.500 20v18" stroke="#5ab182"/><path d="M72 54.500H54.500" stroke="#e0b14a"/><path d="M37.500 72V54.500" stroke="#cc355e"/></g><path d="M44 27h-6.500a6.500 6.500 0 1 1 6.500-6.500z" fill="#64c2ea"/><path d="M65 44v-6.500a6.500 6.500 0 1 1 6.500 6.500z" fill="#5ab182"/><path d="M48 65h6.500a6.500 6.500 0 1 1-6.500 6.500z" fill="#e0b14a"/><path d="M27 48v6.500a6.500 6.500 0 1 1-6.500-6.500z" fill="#cc355e"/></svg></span>
  <span class="app-icon on"><svg viewBox="0 0 92 92"><rect width="92" height="92" rx="21" fill="url(#g-zoom)"/><text x="46" y="53" text-anchor="middle" font-size="24" font-weight="600" fill="#fff">zoom</text></svg></span>
  <span class="app-icon"><svg viewBox="0 0 92 92"><rect width="92" height="92" rx="21" fill="url(#g-store)"/><g stroke="#fff" stroke-width="8" stroke-linecap="round"><path d="M49 21L32 52M42 21l27 49M18 57h34M64 57h10M26 67l-3 4"/></g></svg></span>
  <span class="app-icon"><svg class="tiles" viewBox="0 0 92 92"><path d="M0 0h92v92H0z" fill="#fff"/><path d="M14 0h9v50h-9zM22 52h59v25H22z" fill="#98e6ea"/><path d="M22 0h70v52H22z" fill="#183d85"/><path d="M0 50h22v42H0z" fill="#3571f5"/></svg></span>
  <span class="app-icon on"><svg viewBox="0 0 92 92"><rect width="92" height="92" rx="21" fill="url(#g-grey)"/><circle cx="46" cy="46" r="39" fill="#2b2b2d"/><circle cx="46" cy="46" r="33" fill="none" stroke="#a8aaac" stroke-width="4"/><circle cx="46" cy="46" r="36" fill="none" stroke="#8b8d90" stroke-width="4" stroke-dasharray="2 2"/><circle cx="46" cy="46" r="22" fill="#555" stroke="#909294" stroke-width="4"/><path d="M46 46h30M46 46L30 19M46 46L30 73" stroke="#b4b6b8" stroke-width="4"/><circle cx="46" cy="46" r="4" fill="#333"/></svg></span>
  <span class="app-icon on"><svg viewBox="0 0 92 92"><rect width="92" height="92" rx="21" fill="#f0efec"/><path d="M0 23v-2Q0 0 21 0h50q21 0 21 21v2z" fill="url(#g-notes)"/><path d="M0 28h92" stroke="#bbb" stroke-width="2" stroke-dasharray="2 2"/><path d="M0 46h92M0 69h92" stroke="#d5d3d3" stroke-width="2"/></svg></span>
  <span class="app-icon"><svg viewBox="0 0 92 92"><rect width="92" height="92" rx="21" fill="url(#g-white)"/><circle cx="46" cy="46" r="39" fill="#3f8ce6"/><circle cx="46" cy="46" r="34" fill="none" stroke="#d5e8fb" stroke-width="6" stroke-dasharray="1 3"/><path d="M74 22L40 41l11 10z" fill="#e0503f"/><path d="M18 70l22-29 11 10z" fill="#f2f2f2"/></svg></span>
  <span class="app-icon on"><svg viewBox="0 0 92 92"><rect width="92" height="92" rx="21" fill="url(#g-white)"/><rect x="22" y="50" width="55" height="31" rx="7" fill="#2450e0"/><rect x="22" y="34" width="55" height="25" rx="6" fill="url(#g-word2)"/><rect x="22" y="11" width="55" height="24" rx="7" fill="url(#g-word1)"/><rect x="12" y="43" width="30" height="31" rx="7" fill="#1c3fa8"/><text x="27" y="67" text-anchor="middle" font-size="22" font-weight="700" fill="#fff">W</text></svg></span>
  <span class="app-icon"><svg viewBox="0 0 92 92"><rect width="92" height="92" rx="21" fill="url(#g-white)"/><rect x="22" y="34" width="55" height="47" rx="7" fill="#458a3e"/><path d="M22 18q0-7 7-7h20v40q0 8-8 8H22z" fill="#79c560"/><path d="M49 35h28v24H49z" fill="#2a6a2c"/><rect x="49" y="11" width="28" height="24" rx="7" fill="#9be67d"/><rect x="12" y="43" width="30" height="31" rx="7" fill="#1f6b3c"/><text x="27" y="67" text-anchor="middle" font-size="22" font-weight="700" fill="#fff">X</text></svg></span>
  <span class="app-icon on"><svg viewBox="0 0 92 92"><rect width="92" height="92" rx="21" fill="url(#g-white)"/><circle cx="47" cy="46" r="36" fill="url(#g-ppt)"/><path d="M38 14q10 3 10 18 0 14 15 14h16q-1 32-32 36Q12 80 12 46q2-26 26-32z" fill="url(#g-ppt2)"/><rect x="11" y="43" width="30" height="31" rx="7" fill="#c22f3d"/><text x="26" y="67" text-anchor="middle" font-size="22" font-weight="700" fill="#fff">P</text></svg></span>
  <span class="app-icon on"><svg viewBox="0 0 92 92"><rect width="92" height="92" rx="21" fill="#f4f4f4"/><circle cx="46" cy="46" r="40" fill="#4f9f54"/><path d="M11.400 26A40 40 0 0 1 80.600 26H46L29 56z" fill="#dc5341"/><path d="M80.600 26A40 40 0 0 1 46 86l17-30-17-30z" fill="#f3bf45"/><circle cx="46" cy="46" r="19" fill="#fff"/><circle cx="46" cy="46" r="15" fill="#4580ea"/></svg></span>
  <span class="rule"></span>
  <span class="app-icon on"><svg viewBox="0 0 92 92"><rect width="92" height="92" rx="21" fill="#fff"/><path d="M61 14L14 57l7 6 40-31z" fill="#2563a8"/><path d="M61 78L14 35l7-6 40 31z" fill="#3379cc"/><path d="M61 14l17 8v48l-17 8z" fill="#4a97e8"/></svg></span>
  <span class="app-icon on"><svg><use href="#d-acrobat"/></svg></span>
  <span class="app-icon on"><svg viewBox="0 0 92 92"><rect x="1" y="1" width="90" height="90" rx="21" fill="url(#g-nav)" stroke="#4a526b" stroke-width="2"/><g fill="url(#g-petal)"><circle cx="43" cy="30" r="18"/><circle cx="58" cy="38" r="18"/><circle cx="61" cy="53" r="18"/><circle cx="49" cy="62" r="18"/><circle cx="34" cy="58" r="18"/><circle cx="31" cy="42" r="18"/></g><path d="M63 29L27 44l14 6 8 17z" fill="#fff"/></svg></span>
  <span class="app-icon on"><svg viewBox="0 0 92 92"><rect width="92" height="92" rx="21" fill="#fdfdfd"/><path d="M0 24h92M0 35h92M0 46h92M0 57h92M0 68h92M0 79h92" stroke="#bcbcbc" stroke-width="2"/><path d="M16 0v92" stroke="#efb5b5" stroke-width="1"/><path d="M82-4L45 74" stroke="#5f7489" stroke-width="9"/><path d="M84-8L48 70" stroke="#c9d7e3" stroke-width="5"/><path d="M41 71l8 3-14 22z" fill="#8a8480"/></svg></span>
  <span class="app-icon on"><svg viewBox="0 0 92 92"><rect y="-2" width="92" height="94" rx="21" fill="#22252a"/><path d="M15 74c8-4 13-20 17-34 4-16 8-25 14-25s10 9 14 25c4 14 9 30 17 34-8 3-13-5-18-14-5-10-8-13-13-13s-8 3-13 13c-5 9-10 17-18 14z" fill="url(#g-arc)"/></svg></span>
  <span class="app-icon on"><svg viewBox="0 0 92 92"><rect width="92" height="92" rx="21" fill="url(#g-white)"/><path d="M32 17q12-10 22 1 16-2 19 13 12 9 5 22 3 18-14 20-10 14-22 3-17 3-20-12-14-8-7-22 0-20 17-25z" fill="url(#g-codex)"/><path d="M31 36q8 4 8 10t-8 12M48 56h14" stroke="#fff" stroke-width="5" stroke-linecap="round" fill="none"/></svg></span>
  <span class="app-icon on"><svg viewBox="0 0 92 92"><rect width="92" height="92" rx="21" fill="#14120e"/><path d="M46 14l28 16v32L46 78 18 62V30z" fill="#5c5a57"/><path d="M18 30h56L46 46z" fill="#fff"/><path d="M46 46l28-16-28 48z" fill="#d5d5d3"/><path d="M46 46L18 62l28 16z" fill="#83817e"/></svg></span>
  <span class="app-icon on"><svg viewBox="0 0 92 92"><circle cx="46" cy="46" r="48" fill="#dfe2e2"/><path d="M-2 53A48 48 0 0 1 4 24Q20 14 40 19 44 6 52-2 60-1 68 3 58 9 55 22 70 30 77 50l17 2a48 48 0 0 1-2 9l-15 1q0 20-13 28a48 48 0 0 1-12 4q13-14 13-34Q42 56 39 32 10 28-2 53z" fill="#4a8acb"/><path d="M-2 53A48 48 0 0 1 4 24Q20 14 40 19 44 6 52-2 60-1 68 3 58 9 55 22q10 5 14 14L56 33q-8-2-17-1Q10 28-2 53z" fill="#6ca83d"/><path d="M47 34q2 16 15 20-2-14-15-20z" fill="#eef1f1"/></svg></span>
  <span class="app-icon on"><svg viewBox="0 0 92 92"><rect width="92" height="92" rx="21" fill="#040506"/><path d="M29 78Q8 42 28 22 54 4 78 30 56 14 38 27 22 45 38 68zM47 63Q28 38 42 26 60 17 77 32 60 26 52 32 42 42 53 56zM59 50Q49 40 55 34q10-7 22-2-12 2-14 5-3 5 1 8z" fill="url(#g-wave)"/></svg></span>
  <span class="rule"></span>
  <span class="app-icon"><svg viewBox="0 0 92 92"><path d="M7 3l8-7 8 4 6-9 10 5 10-4 9 9 9-4 11 8-7 14H14z" fill="#d8d8da"/><path d="M26 6l6-8 8 10zM52 12l7-12 9 8z" fill="#7a5644"/><path d="M30 6l9-3 3 8z" fill="#55b7c9"/><path d="M6 4q40 20 80 0l-9 84q-1 9-14 9H29q-13 0-14-9z" fill="url(#g-trash)" opacity=".95"/></svg></span>
</footer>
</body>
</html>
```
FILE: styles.css
```css
* { box-sizing: border-box; }
body, h1, h2, h3, h4, p { margin: 0; }
html, body { height: 100%; }
body {
  display: flex;
  flex-direction: column;
  overflow: hidden;
  background: linear-gradient(#000535 0, #000535 76px, #000 76px, #000 93%, #00042c 98%);
  color: #fff;
  font-family: Inter, "Liberation Sans", sans-serif;
  font-size: 28px;
}
button, input { font: inherit; color: inherit; border: 0; background: none; padding: 0; margin: 0; }
a { color: inherit; text-decoration: none; }
i, em { font-style: normal; }
small { font-size: 24px; }
svg { flex: none; display: block; overflow: visible; }
.sprite { position: absolute; width: 0; height: 0; }
.stroke { fill: none; stroke: currentColor; stroke-width: 2; stroke-linecap: round; stroke-linejoin: round; }
.bare { display: flex; align-items: center; justify-content: center; }
.grow { flex: 1; }

/* Menu bar */
.menubar { display: flex; align-items: center; height: 76px; padding: 0 32px 2px 38px; font-size: 26px; flex: none; }
.apple { width: 32px; height: 32px; }
.menus { display: flex; flex: 1; align-items: center; gap: 42px; padding-left: 38px; }
.menu { font-size: 25px; font-weight: 500; }
.menu-app { font-size: 26px; font-weight: 700; }
.status { display: flex; align-items: center; gap: 39px; padding-right: 37px; color: #e8e8ee; }
.clock { font-weight: 500; }

/* Browser window */
.window { position: relative; display: flex; flex-direction: column; flex: 1; min-height: 0; border-radius: 24px; overflow: hidden; background: #2f2f2f; }
.window::after { content: ""; position: absolute; inset: 0; border: 2px solid #55575c; border-radius: 24px; pointer-events: none; }
.tabbar { display: flex; align-items: center; height: 88px; flex: none; padding-top: 2px; font-size: 25px; color: #bdbdbd; border-bottom: 2px solid #5a5a5a; background: linear-gradient(90deg, #211715, #1a1617 14%, #15171a 25%, #17181b 62%, #211a18 76%, #1d1918); }
.lights { display: flex; gap: 16px; padding-left: 40px; }
.light { width: 24px; height: 24px; border-radius: 50%; }
.red { background: #ec6a5e; }
.yellow { background: #f4bf4f; }
.green { background: #61c554; }
.newtab { width: 56px; margin: 0 20px 0 60px; color: #b5b5b5; }
.tabs { display: flex; align-items: center; align-self: stretch; flex: 1; min-width: 0; }
.tab { display: flex; align-items: center; gap: 17px; width: 352px; height: 32px; padding: 0 26px 0 23px; border-left: 2px solid #444; }
.tab span { flex: 1; overflow: hidden; white-space: nowrap; line-height: 36px; mask-image: linear-gradient(90deg, #000 88%, transparent); }
.tab-active { position: relative; align-self: flex-end; width: 346px; height: 80px; margin: 0 0 -2px 5px; padding: 0 20px 4px; background: #2f2f2f; border: 1px solid #5a5a5a; border-bottom: 0; border-radius: 20px 20px 0 0; color: #e6e6e6; }
.tab-active::before, .tab-active::after { content: ""; position: absolute; bottom: 0; width: 14px; height: 14px; }
.tab-active::before { left: -14px; background: radial-gradient(circle at 0 0, transparent 13px, #2f2f2f 14px); }
.tab-active::after { right: -14px; background: radial-gradient(circle at 100% 0, transparent 13px, #2f2f2f 14px); }
.tabtools { display: flex; align-items: center; gap: 48px; padding-right: 24px; }
.update { position: relative; height: 52px; width: 152px; margin-right: -24px; border-radius: 26px; background: #2d3442; color: #fff; font-size: 24px; font-weight: 600; }
.update::before { content: ""; position: absolute; left: -15px; top: 10px; height: 32px; border-left: 2px solid #444; }
.profile { width: 40px; height: 40px; border-radius: 50%; background: #7f8c8b; color: #dfe5e4; font-size: 16px; line-height: 40px; text-align: center; }
.toolbar { display: flex; align-items: center; gap: 43px; height: 88px; flex: none; padding: 2px 14px 0 30px; border-bottom: 2px solid #5a5a5a; color: #d0d0d0; }
.dim { color: #777; }
.address { flex: 1; min-width: 0; padding-left: 44px; text-align: center; font-size: 26px; color: #bdbdbd; }
.ask { display: flex; align-items: center; justify-content: center; gap: 14px; width: 228px; height: 64px; border-radius: 16px; background: #454545; color: #d2d2d2; font-size: 23px; font-weight: 500; }
.bookmarks { display: flex; align-items: center; height: 72px; flex: none; padding: 4px 14px 0 28px; border-bottom: 2px solid #6a6a6a; font-size: 24px; color: #c0c0c0; }
.marks { display: flex; flex: 1; min-width: 0; gap: 42px; overflow: hidden; mask-image: linear-gradient(90deg, #000 98%, transparent); }
.mark { display: flex; align-items: center; flex: none; gap: 13px; white-space: nowrap; }
.mark-ip { width: 170px; }
.mark-cut { width: 297px; }
.more { width: 36px; }
.viewport { display: flex; flex: 1; min-height: 0; }
.scroll { width: 16px; background: #101b29; }
.thumb { width: 14px; height: 45%; border-radius: 8px; background: #253861; }
.hint { position: absolute; left: 11px; bottom: 11px; height: 42px; padding: 0 11px; border: 2px solid #3c3f47; border-radius: 12px; background: #23242b; font-size: 26px; line-height: 38px; color: #b4b4b6; white-space: nowrap; }
.hint b { font-weight: 400; color: #ececec; }

/* Page */
.page { position: relative; display: flex; flex-direction: column; flex: 1; min-width: 0; background: #15283a; }
.banner { height: 88px; flex: none; background: linear-gradient(90deg, #8b36e2, #4a6cc4 32%, #3f90aa 50%, #4a6cc4 68%, #8b36e2); }
.banner-in { display: flex; align-items: center; gap: 24px; max-width: 2560px; height: 100%; margin: 0 auto; padding: 0 32px; }
.demo { display: flex; align-items: center; gap: 16px; height: 56px; padding: 0 24px; border-radius: 28px; background: rgba(255, 255, 255, .2); font-weight: 600; }
.pitch { display: flex; align-items: center; flex: 1; gap: 16px; }
.learn { display: flex; align-items: center; gap: 8px; height: 56px; padding: 0 24px; border-radius: 16px; background: rgba(255, 255, 255, .2); font-weight: 500; }
.dismiss { width: 48px; margin-left: -8px; }
.app { display: flex; flex: 1; min-height: 0; margin-top: 4px; border-top: 2px solid #1e3a4e; background: #101b2a; }

/* Sidebar */
.sidebar { display: flex; flex-direction: column; width: 560px; flex: none; border-right: 2px solid #232b63; background: #0e1a28; color: #ccd5e0; }
.brand { display: flex; align-items: center; gap: 24px; height: 128px; flex: none; padding: 4px 40px 0; border-bottom: 2px solid #142030; }
.brand-name { display: block; color: #fff; font-size: 36px; line-height: 44px; }
.brand-sub { margin-top: 4px; width: 300px; color: #5cc6e2; font-size: 19px; line-height: 22px; font-weight: 500; }
.child { padding: 32px 32px; border-bottom: 2px solid #121f2e; }
.child-card { display: flex; align-items: center; gap: 24px; width: 496px; max-width: 100%; height: 132px; padding: 0 24px; border: 2px solid #3a37a0; border-radius: 24px; background: #152746; text-align: left; }
.child-text { flex: 1; padding-top: 6px; }
.child-text b { display: block; color: #fff; font-size: 32px; font-weight: 600; line-height: 40px; }
.child-text small { display: block; color: #b8c3d1; line-height: 40px; }
.avatar { display: block; width: 72px; height: 72px; flex: none; border-radius: 50%; background: linear-gradient(135deg, #62cfe9, #3f8fb5); box-shadow: 0 0 0 4px #23475c; color: #fff; font-size: 32px; font-weight: 700; line-height: 72px; text-align: center; }
.avatar-lg { width: 80px; height: 80px; line-height: 80px; font-size: 32px; }
.nav { flex: 1; min-height: 0; overflow: hidden; padding: 26px 24px; }
.item { display: flex; align-items: center; gap: 24px; height: 112px; padding: 0 24px; margin-bottom: 8px; border-radius: 24px; font-weight: 500; }
.ibox { display: flex; align-items: center; justify-content: center; width: 72px; height: 72px; border-radius: 20px; background: #121d2c; }
.item-active { background: #192c3b; color: #5fcce6; }
.item-active .ibox { background: #23455a; }
.item-active::after { content: ""; width: 12px; height: 48px; margin: 0 -8px 0 auto; border-radius: 6px; background: #50b4d2; }
.sidefoot { flex: none; padding: 32px 32px 18px; border-top: 2px solid #142030; }

/* Top bar */
.content { display: flex; flex-direction: column; flex: 1; min-width: 0; }
.topbar { display: flex; align-items: center; gap: 18px; height: 128px; flex: none; padding: 0 48px; border-bottom: 2px solid #262c63; background: #101a29; }
.home { display: flex; align-items: center; gap: 12px; height: 68px; padding: 0 24px; border: 2px solid #21455a; border-radius: 16px; background: #182b3b; color: #5fcbe6; font-weight: 500; }
.crumb { flex: 1; padding: 4px 0 0 6px; }
.crumb h2 { font-size: 36px; font-weight: 600; line-height: 48px; }
.crumb p { color: #94a0b1; font-size: 24px; line-height: 38px; }
.quick { display: flex; align-items: center; gap: 12px; height: 56px; padding: 0 24px; border-radius: 16px; background: #e9a13b; box-shadow: 0 0 56px rgba(233, 161, 59, .28); font-size: 24px; font-weight: 500; }
.round { display: flex; align-items: center; justify-content: center; width: 84px; height: 84px; border-radius: 24px; color: #ccd5e0; }
.round-on { border: 2px solid #4a5568; background: #354053; }
.flip { transform: rotate(180deg); }
.user { display: flex; align-items: center; gap: 24px; height: 72px; padding-left: 24px; border-left: 2px solid #38379b; white-space: nowrap; }
.user-text { padding-top: 4px; }
.user b { display: block; font-weight: 500; line-height: 36px; }
.user small { display: block; color: #c5cedb; line-height: 34px; }

/* Main column */
.main { flex: 1; min-height: 0; overflow: hidden; padding: 48px 48px 0; background: radial-gradient(1400px 700px at 75% 0, rgba(34, 72, 80, .3), transparent), radial-gradient(900px 800px at 10% 0, rgba(28, 52, 70, .4), transparent), #101b2a; }
.stack { display: flex; flex-direction: column; gap: 48px; max-width: 2560px; margin: 0 auto; }
.titlerow { display: flex; align-items: center; gap: 16px; }
h1 { font-size: 48px; line-height: 64px; }
.lead { color: #cbd3de; font-size: 32px; line-height: 48px; }
.btn { display: flex; align-items: center; gap: 16px; height: 76px; padding: 0 32px; border: 2px solid #4a5568; border-radius: 24px; background: #354053; color: #f4f6f9; font-weight: 500; }
.btn-main { border: 0; background: linear-gradient(90deg, #51b4d6, #43907f); }
.btn-sm { gap: 8px; height: 68px; padding: 0 24px; border-radius: 16px; }
.card { padding: 48px; border: 2px solid #374354; border-radius: 32px; background: #1f2838; }
.security { display: flex; align-items: center; gap: 16px; border-color: #5523ae; background: linear-gradient(90deg, #282549, #2d2747); }
.sec-icon { display: flex; align-items: center; justify-content: center; width: 96px; height: 96px; margin-right: 16px; border-radius: 24px; background: #37236b; color: #a78bf5; }
.security h3 { color: #efecfd; font-size: 32px; font-weight: 600; line-height: 48px; }
.security p { color: #bdaef5; line-height: 40px; }
.grid { display: grid; grid-template-columns: repeat(4, 1fr); gap: 32px; }
.stat { display: flex; flex-direction: column; align-items: center; padding: 32px; }
.stat strong { font-size: 60px; line-height: 72px; }
.stat span { color: #939eae; line-height: 40px; }
.cyan strong { color: #62cfe9; }
.violet strong { color: #a78bf5; }
.amber strong { color: #f2bf45; }
.head { display: flex; align-items: center; gap: 16px; font-size: 36px; font-weight: 600; line-height: 56px; }
.head-levels { margin-bottom: 32px; }
.head-levels svg { color: #50b4d2; }
.head-members svg { color: #e5516a; }
.level { padding: 32px; border-radius: 24px; }
.level h4 { display: flex; align-items: center; gap: 16px; margin-bottom: 16px; font-size: 32px; font-weight: 700; line-height: 48px; }
.level p { line-height: 40px; }
.owner { background: #48302a; color: #f6d45f; }
.owner p { color: #ceac4e; }
.caregiver { background: #243a4e; color: #86e2f3; }
.caregiver p { color: #6cb9cb; }
.viewer { background: #364152; color: #ccd4de; }
.viewer p { color: #a4aebb; }
.temporary { background: #332366; color: #bfaef8; }
.temporary p { color: #9684cb; }
.membershead { display: flex; align-items: center; margin-bottom: 32px; }
.members { display: flex; flex-direction: column; gap: 24px; }
.member { display: flex; align-items: center; gap: 32px; height: 200px; padding: 0 32px; border-radius: 24px; background: #364152; }
.member-next { background: linear-gradient(#364152, #2c3647 40px); }
.face { position: relative; width: 96px; height: 96px; border-radius: 50%; background: linear-gradient(135deg, #f3bf45, #d9622a); font-size: 36px; font-weight: 700; line-height: 96px; text-align: center; }
.count { position: absolute; top: -8px; right: -8px; width: 40px; height: 40px; border: 4px solid #1f2838; border-radius: 50%; background: #e04f4c; font-size: 24px; font-weight: 500; line-height: 32px; }
.member h4 { display: flex; align-items: center; gap: 16px; font-size: 32px; font-weight: 600; line-height: 48px; }
.member h4 svg { color: #e9a13b; }
.mail { color: #939eae; line-height: 40px; }
.meta { display: flex; align-items: center; gap: 8px; margin-top: 8px; color: #ccd4de; font-size: 24px; line-height: 40px; }
.role { margin-left: 32px; color: #f4f6f9; font-weight: 500; }

/* Floating engine panel */
.engine { position: absolute; right: 32px; bottom: 32px; display: flex; align-items: center; gap: 24px; height: 132px; padding: 0 24px; border: 2px solid #414c5e; border-radius: 32px; background: #222a3b; box-shadow: 0 20px 80px rgba(0, 0, 0, .25); text-align: left; }
.engine-icon { position: relative; display: flex; align-items: center; justify-content: center; width: 80px; height: 80px; border-radius: 24px; background: linear-gradient(135deg, #8449cf, #3f93ae); color: #d9dee8; }
.engine-count { position: absolute; top: -8px; right: -8px; width: 32px; height: 32px; border-radius: 50%; background: #53b681; color: #fff; font-size: 20px; font-weight: 700; line-height: 32px; text-align: center; }
.engine-text small { display: block; color: #939eae; line-height: 32px; }
.engine-title { display: flex; align-items: center; gap: 16px; height: 48px; font-weight: 600; }
.engine-title em { padding: 0 12px; border-radius: 8px; background: #28413f; color: #53b681; font-size: 20px; font-weight: 600; line-height: 48px; }

/* Dock */
.dock { display: flex; align-items: flex-start; align-self: center; flex: none; gap: 30px; height: 144px; margin: 2px 0 10px; padding: 19px; border: 2px solid #34364f; border-radius: 44px; background: linear-gradient(#131628, #13183c); }
.app-icon { display: flex; flex-direction: column; align-items: center; gap: 19px; width: 92px; }
.app-icon svg { width: 92px; height: 92px; }
.app-icon .tiles { border-radius: 21px; overflow: hidden; }
.on::after { content: ""; width: 8px; height: 8px; border-radius: 50%; background: #9297bf; }
.rule { width: 2px; height: 108px; margin: -2px 9px 0 14px; background: #474a66; }
```
